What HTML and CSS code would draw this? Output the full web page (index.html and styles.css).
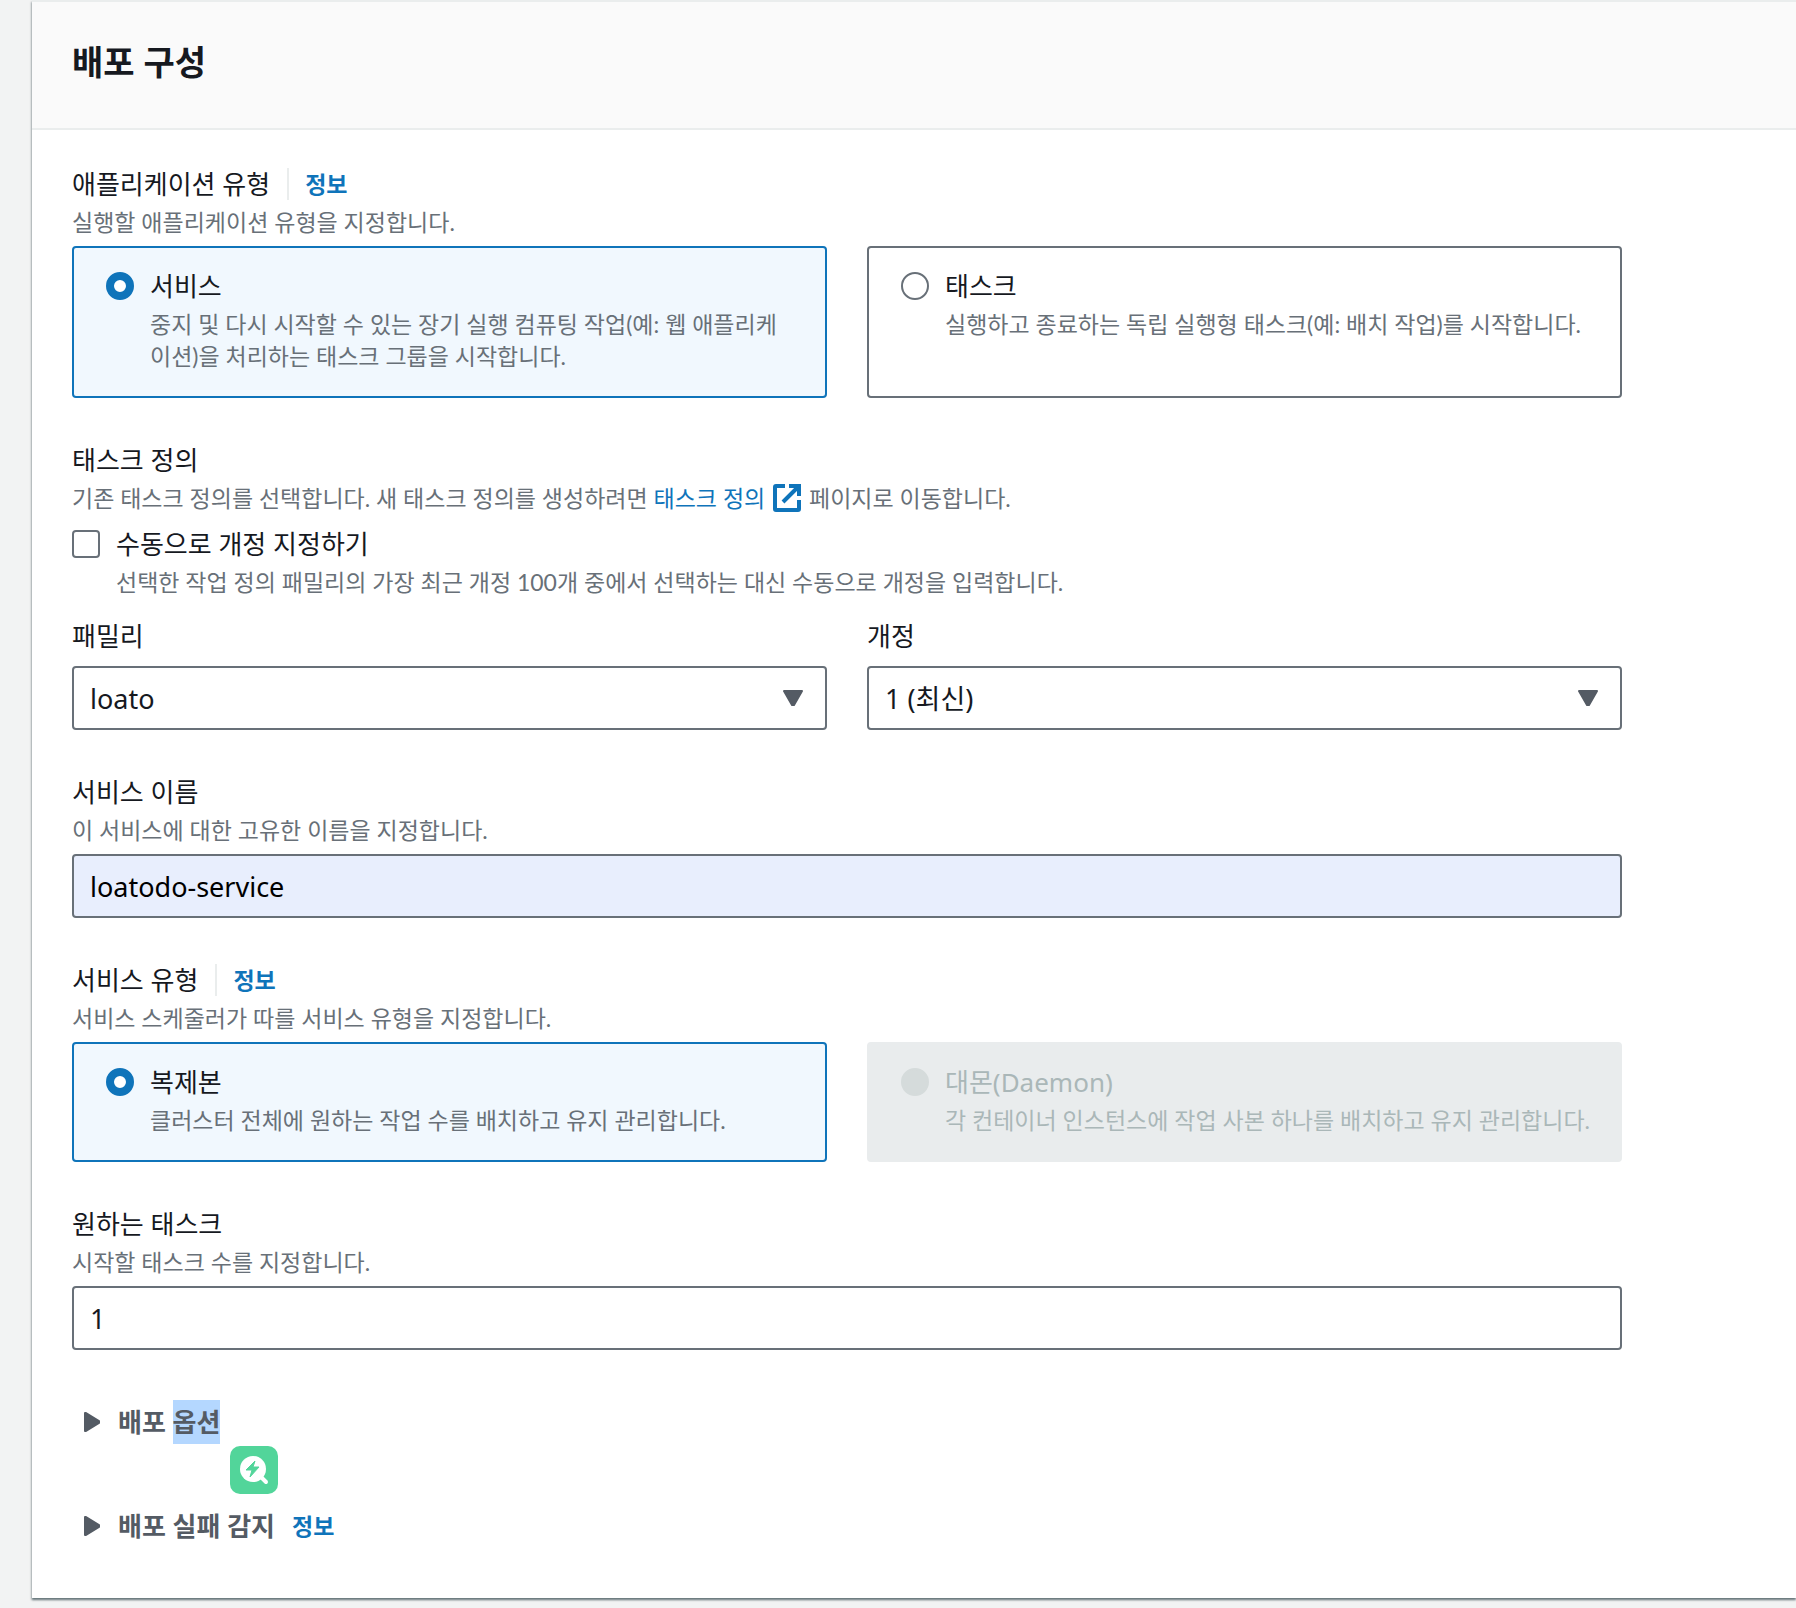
FILE: index.html
```html
<!DOCTYPE html>
<html lang="ko">
<head>
  <meta charset="utf-8">
  <meta name="viewport" content="width=device-width, initial-scale=1">
  <title>배포 구성</title>
  <link rel="stylesheet" href="styles.css">
</head>
<body>

<form class="panel">
  <header class="panel-header">
    <h2>배포 구성</h2>
  </header>

  <div class="panel-body">

    <section class="field" role="radiogroup" aria-labelledby="appTypeLabel">
      <div class="label-row">
        <span class="label" id="appTypeLabel">애플리케이션 유형</span>
        <a class="info divided" href="#">정보</a>
      </div>
      <p class="desc">실행할 애플리케이션 유형을 지정합니다.</p>
      <div class="columns control">
        <label class="tile selected">
          <input type="radio" name="appType" checked>
          <span class="tile-text">
            <span class="label">서비스</span>
            <span class="desc">중지 및 다시 시작할 수 있는 장기 실행 컴퓨팅 작업(예: 웹 애플리케이션)을 처리하는 태스크 그룹을 시작합니다.</span>
          </span>
        </label>
        <label class="tile">
          <input type="radio" name="appType">
          <span class="tile-text">
            <span class="label">태스크</span>
            <span class="desc">실행하고 종료하는 독립 실행형 태스크(예: 배치 작업)를 시작합니다.</span>
          </span>
        </label>
      </div>
    </section>

    <section class="field">
      <div class="label">태스크 정의</div>
      <p class="desc">기존 태스크 정의를 선택합니다. 새 태스크 정의를 생성하려면
        <a class="external" href="#">태스크 정의
          <svg class="external-icon" viewBox="0 0 28 28" aria-hidden="true">
            <path d="M12 2H3Q2 2 2 3V25Q2 26 3 26H25Q26 26 26 25V16" />
            <path d="M16 2H26V12M26 2L10 18" />
          </svg></a>
        페이지로 이동합니다.</p>
      <label class="check control">
        <input type="checkbox">
        <span>
          <span class="label">수동으로 개정 지정하기</span>
          <span class="desc">선택한 작업 정의 패밀리의 가장 최근 개정 100개 중에서 선택하는 대신 수동으로 개정을 입력합니다.</span>
        </span>
      </label>
      <div class="columns selects">
        <div>
          <label class="label" for="family">패밀리</label>
          <div class="select control">
            <select id="family"><option>loato</option></select>
            <svg viewBox="0 0 20 16" aria-hidden="true"><path d="M1 1H19L11 15H9Z" /></svg>
          </div>
        </div>
        <div>
          <label class="label" for="revision">개정</label>
          <div class="select control">
            <select id="revision"><option>1 (최신)</option></select>
            <svg viewBox="0 0 20 16" aria-hidden="true"><path d="M1 1H19L11 15H9Z" /></svg>
          </div>
        </div>
      </div>
    </section>

    <section class="field">
      <label class="label" for="serviceName">서비스 이름</label>
      <p class="desc">이 서비스에 대한 고유한 이름을 지정합니다.</p>
      <input class="text control filled" type="text" id="serviceName" value="loatodo-service">
    </section>

    <section class="field" role="radiogroup" aria-labelledby="serviceTypeLabel">
      <div class="label-row">
        <span class="label" id="serviceTypeLabel">서비스 유형</span>
        <a class="info divided" href="#">정보</a>
      </div>
      <p class="desc">서비스 스케줄러가 따를 서비스 유형을 지정합니다.</p>
      <div class="columns control">
        <label class="tile selected">
          <input type="radio" name="serviceType" checked>
          <span class="tile-text">
            <span class="label">복제본</span>
            <span class="desc">클러스터 전체에 원하는 작업 수를 배치하고 유지 관리합니다.</span>
          </span>
        </label>
        <label class="tile disabled">
          <input type="radio" name="serviceType" disabled>
          <span class="tile-text">
            <span class="label">대몬(Daemon)</span>
            <span class="desc">각 컨테이너 인스턴스에 작업 사본 하나를 배치하고 유지 관리합니다.</span>
          </span>
        </label>
      </div>
    </section>

    <section class="field">
      <label class="label" for="desiredTasks">원하는 태스크</label>
      <p class="desc">시작할 태스크 수를 지정합니다.</p>
      <input class="text control" type="text" inputmode="numeric" id="desiredTasks" value="1">
    </section>

    <section class="expander">
      <button type="button" aria-expanded="false">
        <svg viewBox="0 0 16 20" aria-hidden="true"><path d="M1 1H2L15 9V11L2 19H1Z" /></svg>
        <span>배포 <span class="highlight">옵션</span></span>
      </button>
      <button class="lookup" type="button" aria-label="검색">
        <svg viewBox="0 0 48 48" aria-hidden="true">
          <circle cx="23" cy="23" r="13" />
          <path class="handle" d="M31 31L36 36" />
          <path class="bolt" d="M25 15L16 24H22L20 31L29 21H23Z" />
        </svg>
      </button>
    </section>

    <section class="expander">
      <button type="button" aria-expanded="false">
        <svg viewBox="0 0 16 20" aria-hidden="true"><path d="M1 1H2L15 9V11L2 19H1Z" /></svg>
        <span>배포 실패 감지</span>
      </button>
      <a class="info" href="#">정보</a>
    </section>

  </div>
</form>

</body>
</html>
```

FILE: styles.css
```css
* {
  box-sizing: border-box;
}

body {
  margin: 0;
  min-height: 100vh;
  background-color: #f2f3f3;
  color: #16191f;
  font-family: "Noto Sans", "Noto Sans CJK KR", sans-serif;
  font-size: 26px;
  line-height: 44px;
}

h2, p {
  margin: 0;
}

a {
  color: #0f74ba;
  text-decoration: none;
}

.panel {
  margin-left: 32px;
  background-color: #ffffff;
  border-top: 2px solid #eaeded;
  box-shadow: 0 2px 2px rgba(0, 28, 36, 0.5), -1px 2px 2px rgba(0, 28, 36, 0.15);
}

.panel-header {
  padding: 38px 40px 44px;
  background-color: #fafafa;
  border-bottom: 2px solid #eaeded;
}

.panel-header h2 {
  font-size: 34px;
  line-height: 44px;
}

.panel-body {
  display: flex;
  flex-direction: column;
  gap: 40px;
  max-width: 1630px;
  padding: 32px 40px 40px;
}

/* labels and descriptions */
.label {
  display: block;
}

.label-row {
  display: flex;
  align-items: center;
  gap: 17px;
}

.desc {
  display: block;
  color: #687078;
  font-family: Lato, "Noto Sans CJK KR", sans-serif;
  font-size: 23px;
  line-height: 32px;
}

.control {
  margin-top: 8px;
}

.info {
  font-size: 23px;
  font-weight: bold;
  line-height: 32px;
}

.divided {
  padding-left: 16px;
  border-left: 2px solid #eaeded;
}

.external-icon {
  width: 28px;
  height: 28px;
  margin: 0 2px;
  vertical-align: -5px;
  fill: none;
  stroke: #0f74ba;
  stroke-width: 4;
}

.external {
  line-height: 28px;
}

/* tiles */
.columns {
  display: grid;
  grid-template-columns: 1fr 1fr;
  gap: 40px;
}

.tile {
  display: flex;
  gap: 16px;
  padding: 16px 28px 24px 32px;
  border: 2px solid #687078;
  border-radius: 4px;
}

.tile-text {
  flex: 1;
}

.selected {
  background-color: #f1f8fe;
  border-color: #0f74ba;
}

.disabled {
  background-color: #e9eced;
  border-color: #e9eced;
}

.disabled, .disabled .desc {
  color: #aab7b8;
}

input[type="radio"], input[type="checkbox"] {
  appearance: none;
  flex: none;
  width: 28px;
  height: 28px;
  margin: 8px 0;
  background-color: #ffffff;
  border: 2px solid #687078;
}

input[type="radio"] {
  border-radius: 50%;
}

input[type="radio"]:checked {
  border: 8px solid #0f74ba;
}

input[type="radio"]:disabled {
  background-color: #d5dbdb;
  border-color: #d5dbdb;
}

input[type="checkbox"] {
  border-radius: 4px;
}

.check {
  display: flex;
  gap: 16px;
}

/* selects and text boxes */
.selects {
  margin-top: 16px;
}

.select {
  position: relative;
}

.select select, .text {
  display: block;
  width: 100%;
  height: 64px;
  padding: 0 16px;
  color: #16191f;
  background-color: #ffffff;
  border: 2px solid #687078;
  border-radius: 4px;
  font-family: inherit;
  font-size: 27px;
}

.select select {
  appearance: none;
}

.select svg {
  position: absolute;
  top: 24px;
  right: 24px;
  width: 20px;
  height: 16px;
  pointer-events: none;
}

.select path, .expander path {
  fill: #545b64;
  stroke: #545b64;
  stroke-width: 2;
  stroke-linejoin: round;
}

.text.filled {
  color: #000000;
  background-color: #e8eefd;
}

/* expandable sections */
.expander {
  position: relative;
  display: flex;
  align-items: center;
  gap: 17px;
  padding: 10px 12px;
}

.expander button {
  display: flex;
  align-items: center;
  gap: 18px;
  padding: 0;
  color: #545b64;
  background: none;
  border: 0;
  font-family: inherit;
  font-size: 26px;
  font-weight: bold;
  line-height: 44px;
}

.expander button svg {
  width: 16px;
  height: 20px;
}

.highlight {
  display: inline-block;
  background-color: #b4d7ff;
}

.expander .lookup {
  position: absolute;
  top: 56px;
  left: 158px;
  width: 48px;
  height: 48px;
  background-color: #52d59a;
  border-radius: 10px;
}

.expander .lookup svg {
  width: 48px;
  height: 48px;
  fill: #ffffff;
}

.expander .lookup .handle {
  stroke: #ffffff;
  stroke-width: 4;
  stroke-linecap: round;
}

.expander .lookup .bolt {
  fill: #52d59a;
  stroke: #52d59a;
  stroke-width: 1;
}
```
